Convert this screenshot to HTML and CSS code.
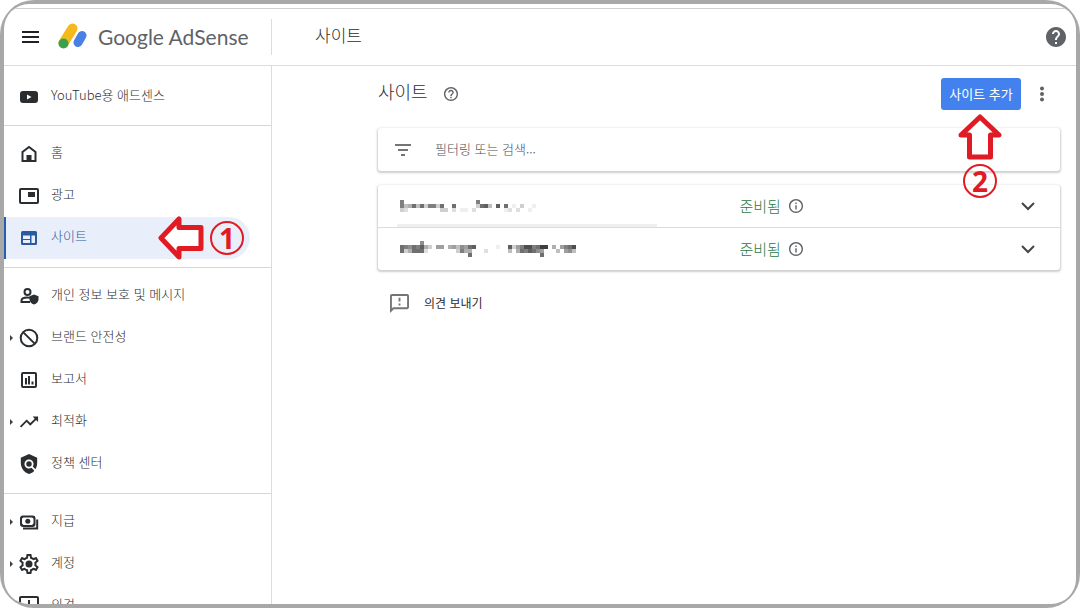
FILE: index.html
```html
<!DOCTYPE html>
<html lang="ko">
  <head>
    <meta charset="UTF-8" />
    <meta name="viewport" content="width=device-width, initial-scale=1.0" />
    <title>Google AdSense - 사이트</title>
    <link rel="stylesheet" href="styles.css">
  </head>
  <body>
    <div class="app">
      <header class="topbar">
        <div class="brand">
          <button class="icon-btn" type="button" aria-label="메뉴">
            <svg class="menu-icon" viewBox="0 0 18 12"><path d="M0 1h17M0 6h17M0 11h17" /></svg>
          </button>
          <a class="logo" href="#">
            <svg class="logo-mark" viewBox="0 0 30 26">
              <path d="M5.500 20L14.500 5.500" stroke="#f4b91c" stroke-width="10" />
              <path d="M20 19.500L24 12.500" stroke="#4a80e4" stroke-width="9" />
              <circle cx="5.500" cy="20.500" r="5" fill="#3c9f4c" />
            </svg>
            <span>Google AdSense</span>
          </a>
        </div>
        <h1>사이트</h1>
        <button class="icon-btn help" type="button" aria-label="도움말">
          <svg class="icon" viewBox="2 2 20 20"><path d="M12 2C6.480 2 2 6.480 2 12s4.480 10 10 10 10-4.480 10-10S17.520 2 12 2zm1 17h-2v-2h2v2zm2.070-7.750l-.9.920C13.450 12.900 13 13.500 13 15h-2v-.5c0-1.100.45-2.100 1.170-2.830l1.240-1.260c.37-.36.59-.86.59-1.410 0-1.100-.9-2-2-2s-2 .9-2 2H8c0-2.210 1.790-4 4-4s4 1.790 4 4c0 .88-.36 1.680-.93 2.250z" /></svg>
        </button>
      </header>

      <div class="content">
        <nav class="sidebar">
          <ul class="first">
            <li>
              <a href="#"><span class="caret"></span>
                <svg class="icon" viewBox="0 0 20 20"><path fill-rule="evenodd" d="M4 4h12a3 3 0 0 1 3 3v6a3 3 0 0 1-3 3H4a3 3 0 0 1-3-3V7a3 3 0 0 1 3-3zm4 3.500v5l4.500-2.500z" /></svg>
                <span class="label">YouTube용 애드센스</span></a>
            </li>
          </ul>
          <ul>
            <li>
              <a href="#"><span class="caret"></span>
                <svg class="icon" viewBox="0 0 20 20"><path fill="none" stroke="currentColor" stroke-width="2" d="M3.500 17V8L10 3l6.500 5v9z" /><path d="M7.500 11h5v6h-5z" /></svg>
                <span class="label">홈</span></a>
            </li>
            <li>
              <a href="#"><span class="caret"></span>
                <svg class="icon" viewBox="0 0 20 20"><rect x="1" y="3" width="18" height="14" rx="1" fill="none" stroke="currentColor" stroke-width="2" /><path d="M9 6h7v5H9z" /></svg>
                <span class="label">광고</span></a>
            </li>
            <li>
              <a class="active" href="#"><span class="caret"></span>
                <svg class="icon" viewBox="0 0 20 20"><path fill-rule="evenodd" d="M3.500 3h13A1.500 1.500 0 0 1 18 4.500v11a1.500 1.500 0 0 1-1.500 1.500h-13A1.500 1.500 0 0 1 2 15.500v-11A1.500 1.500 0 0 1 3.500 3zM4 7.500V11h7V7.500zM4 12v3h7v-3zM12.500 7.500V15H16V7.500z" /></svg>
                <span class="label">사이트</span>
                <span class="callout">
                  <svg class="arrow" viewBox="0 0 46 46"><path d="M3 23L21 4V12.500H43V33.500H21V42Z" /></svg>
                  <span class="number">1</span>
                </span></a>
            </li>
          </ul>
          <ul>
            <li>
              <a href="#"><span class="caret"></span>
                <svg class="icon" viewBox="0 0 20 20"><circle cx="8.500" cy="6" r="3" fill="none" stroke="currentColor" stroke-width="2" /><path fill="none" stroke="currentColor" stroke-width="2" d="M11 16H2.500v-1.500c0-2 3-3 6-3 1 0 2 .1 3 .4" /><path d="M15 8.500l4.500 1.800v3.200c0 2.200-1.800 4.300-4.500 5-2.700-.7-4.500-2.800-4.500-5v-3.200z" /></svg>
                <span class="label">개인 정보 보호 및 메시지</span></a>
            </li>
            <li>
              <a href="#"><span class="caret open"></span>
                <svg class="icon" viewBox="0 0 20 20"><path fill="none" stroke="currentColor" stroke-width="2" d="M3.600 3.600l12.800 12.800M18.300 10a8.300 8.300 0 1 1-16.600 0 8.300 8.300 0 0 1 16.600 0z" /></svg>
                <span class="label">브랜드 안전성</span></a>
            </li>
            <li>
              <a href="#"><span class="caret"></span>
                <svg class="icon" viewBox="0 0 20 20"><rect x="3" y="3" width="14" height="14" rx="1" fill="none" stroke="currentColor" stroke-width="2" /><path d="M6 8h2v6.500H6zM9 6h2v8.500H9zM12.500 11.500h2v3h-2z" /></svg>
                <span class="label">보고서</span></a>
            </li>
            <li>
              <a href="#"><span class="caret open"></span>
                <svg class="icon" viewBox="1 1 22 22"><path d="M16 6l2.290 2.290-4.880 4.880-4-4L2 16.590 3.410 18l6-6 4 4 6.300-6.290L22 12V6z" /></svg>
                <span class="label">최적화</span></a>
            </li>
            <li>
              <a href="#"><span class="caret"></span>
                <svg class="icon" viewBox="1 1 22 22"><path d="M21 5l-9-4-9 4v6c0 5.550 3.840 10.740 9 12 2.300-.56 4.330-1.900 5.880-3.710l-3.120-3.120c-1.940 1.290-4.580 1.070-6.290-.64-1.950-1.950-1.950-5.120 0-7.070 1.950-1.950 5.120-1.950 7.070 0 1.710 1.710 1.920 4.350.64 6.290l2.900 2.900C20.290 15.690 21 13.380 21 11V5z" /><circle cx="12" cy="12" r="3" /></svg>
                <span class="label">정책 센터</span></a>
            </li>
          </ul>
          <ul>
            <li>
              <a href="#"><span class="caret open"></span>
                <svg class="icon" viewBox="0 0 20 20"><rect x="2" y="4.500" width="13.500" height="9.500" rx="2" fill="none" stroke="currentColor" stroke-width="2" /><circle cx="8.800" cy="9.200" r="2.500" /><path d="M2 4h3.500L2 7.500zM15.500 4H12l3.500 3.500zM2 14h3.500L2 10.500zM15.500 14H12l3.500-3.500z" /><path fill="none" stroke="currentColor" stroke-width="2" d="M18.200 7.500V16.500H4" /></svg>
                <span class="label">지급</span></a>
            </li>
            <li>
              <a href="#"><span class="caret open"></span>
                <svg class="icon" viewBox="2 2 20 20"><path d="M19.430 12.980c.04-.32.070-.64.070-.98 0-.34-.03-.66-.07-.98l2.110-1.650c.19-.15.24-.42.12-.64l-2-3.460c-.09-.16-.26-.25-.44-.25-.06 0-.12.010-.17.030l-2.490 1c-.52-.4-1.080-.73-1.690-.98l-.38-2.650C14.460 2.180 14.250 2 14 2h-4c-.25 0-.46.18-.49.42l-.38 2.650c-.61.25-1.170.59-1.690.98l-2.490-1c-.06-.02-.12-.03-.18-.03-.17 0-.34.090-.43.250l-2 3.460c-.13.220-.07.490.12.640l2.110 1.650c-.04.320-.07.650-.07.980 0 .33.030.66.070.98l-2.110 1.650c-.19.150-.24.420-.12.640l2 3.460c.09.160.26.250.44.250.06 0 .12-.01.17-.03l2.490-1c.52.4 1.080.73 1.690.98l.38 2.650c.03.240.24.420.49.420h4c.25 0 .46-.18.49-.42l.38-2.650c.61-.25 1.170-.59 1.690-.98l2.490 1c.06.020.12.030.18.030.17 0 .34-.09.43-.25l2-3.460c.12-.22.070-.49-.12-.64l-2.110-1.650zm-1.980-1.710c.04.310.05.520.05.730 0 .21-.02.430-.05.730l-.14 1.130.89.7 1.080.84-.7 1.210-1.270-.51-1.040-.42-.9.680c-.43.320-.84.560-1.250.73l-1.060.43-.16 1.130-.2 1.350h-1.400l-.19-1.350-.16-1.130-1.060-.43c-.43-.18-.83-.41-1.230-.71l-.91-.7-1.060.43-1.270.510-.7-1.210 1.080-.84.890-.7-.14-1.130c-.03-.31-.05-.54-.05-.74s.020-.43.050-.73l.14-1.130-.89-.7-1.080-.84.7-1.210 1.270.51 1.040.42.9-.68c.43-.32.840-.56 1.250-.73l1.060-.43.160-1.130.2-1.350h1.390l.19 1.350.16 1.130 1.060.43c.43.180.83.410 1.230.71l.91.7 1.060-.43 1.270-.51.7 1.210-1.070.85-.89.7.14 1.130z" /><circle cx="12" cy="12" r="3.500" /></svg>
                <span class="label">계정</span></a>
            </li>
            <li>
              <a href="#"><span class="caret"></span>
                <svg class="icon" viewBox="2 2 20 20"><path d="M20 2H4c-1.100 0-2 .9-2 2v18l4-4h14c1.100 0 2-.9 2-2V4c0-1.100-.9-2-2-2zm0 14H5.200L4 17.200V4h16v12zM11 12h2v2h-2zm0-6h2v4h-2z" /></svg>
                <span class="label">의견</span></a>
            </li>
          </ul>
        </nav>

        <main>
          <div class="page-head">
            <h2>사이트</h2>
            <svg class="hint" viewBox="2 2 20 20"><path d="M11 18h2v-2h-2v2zm1-16C6.480 2 2 6.480 2 12s4.480 10 10 10 10-4.480 10-10S17.520 2 12 2zm0 18c-4.410 0-8-3.590-8-8s3.590-8 8-8 8 3.590 8 8-3.590 8-8 8zm0-14c-2.210 0-4 1.790-4 4h2c0-1.100.9-2 2-2s2 .9 2 2c0 2-3 1.750-3 5h2c0-2.250 3-2.500 3-5 0-2.210-1.790-4-4-4z" /></svg>
            <div class="actions">
              <button class="add-btn" type="button">사이트 추가</button>
              <span class="callout below">
                <svg class="arrow" viewBox="0 0 46 46"><path d="M23 3L42 21H33.500V43H12.500V21H4Z" /></svg>
                <span class="number">2</span>
              </span>
            </div>
            <button class="icon-btn more" type="button" aria-label="더보기">
              <svg viewBox="0 0 6 16"><circle cx="3" cy="2.500" r="2" /><circle cx="3" cy="8" r="2" /><circle cx="3" cy="13.500" r="2" /></svg>
            </button>
          </div>

          <div class="card filter">
            <svg class="filter-icon" viewBox="0 0 16 12"><path d="M0 1h16M3 6h10M6 11h4" /></svg>
            <input type="text" aria-label="필터링 또는 검색" placeholder="필터링 또는 검색..." />
          </div>

          <table class="card sites">
            <tbody>
              <tr>
                <td class="site masked"><svg class="mosaic" data-name="first" viewBox="0 0 180 12"></svg></td>
                <td class="status"><span>준비됨</span>
                  <svg viewBox="2 2 20 20"><path d="M11 7h2v2h-2zm0 4h2v6h-2zm1-9C6.480 2 2 6.480 2 12s4.480 10 10 10 10-4.480 10-10S17.520 2 12 2zm0 18c-4.410 0-8-3.590-8-8s3.590-8 8-8 8 3.590 8 8-3.590 8-8 8z" /></svg></td>
                <td class="expand"><button class="icon-btn" type="button" aria-label="펼치기"><svg viewBox="0 0 14 9"><path d="M1 1l6 6 6-6" /></svg></button></td>
              </tr>
              <tr>
                <td class="site"><svg class="mosaic" data-name="second" viewBox="0 0 180 16"></svg></td>
                <td class="status"><span>준비됨</span>
                  <svg viewBox="2 2 20 20"><path d="M11 7h2v2h-2zm0 4h2v6h-2zm1-9C6.480 2 2 6.480 2 12s4.480 10 10 10 10-4.480 10-10S17.520 2 12 2zm0 18c-4.410 0-8-3.590-8-8s3.590-8 8-8 8 3.590 8 8-3.590 8-8 8z" /></svg></td>
                <td class="expand"><button class="icon-btn" type="button" aria-label="펼치기"><svg viewBox="0 0 14 9"><path d="M1 1l6 6 6-6" /></svg></button></td>
              </tr>
            </tbody>
          </table>

          <a class="feedback" href="#">
            <svg viewBox="2 2 20 20"><path d="M20 2H4c-1.100 0-2 .9-2 2v18l4-4h14c1.100 0 2-.9 2-2V4c0-1.100-.9-2-2-2zm0 14H5.200L4 17.200V4h16v12zM11 12h2v2h-2zm0-6h2v4h-2z" /></svg>
            <span>의견 보내기</span>
          </a>
        </main>
      </div>
    </div>
    <script src="script.js"></script>
  </body>
</html>
```
FILE: styles.css
```css
* {
  box-sizing: border-box;
}
/* rounded grey frame around the whole page, thinner at the corners */
body {
  height: 100vh;
  margin: 0;
  padding: 4px;
  border-radius: 34px;
  background-color: #a8a8a8;
  color: #2b2e31;
  font-family: "Noto Sans CJK KR", sans-serif;
  font-size: 13px;
  line-height: 20px;
}
html {
  background-color: #fff;
}
h1,
h2,
ul {
  margin: 0;
  padding: 0;
  font-weight: 300;
}
ul {
  list-style: none;
}
a {
  color: inherit;
  text-decoration: none;
}
svg {
  display: block;
  flex: none;
  fill: currentColor;
}
.icon {
  width: 20px;
  height: 20px;
}
.icon-btn {
  display: flex;
  padding: 0;
  border: none;
  background: none;
  color: #5f6368;
  cursor: pointer;
}

.app {
  display: flex;
  flex-direction: column;
  height: 100%;
  padding-top: 4px;
  border-radius: 25px;
  background-color: #fff;
  overflow: hidden;
}

.topbar {
  display: flex;
  flex: none;
  align-items: center;
  height: 58px;
  padding-right: 10px;
  border-top: 1px solid #d0d0d0;
  border-bottom: 1px solid #dadce0;
}
.brand {
  display: flex;
  align-items: center;
  gap: 18px;
  width: 268px;
  height: 36px;
  padding-left: 18px;
  border-right: 1px solid #dadce0;
}
.menu-icon {
  width: 18px;
  height: 12px;
  stroke: #202124;
  stroke-width: 2;
}
.logo {
  display: flex;
  align-items: center;
  gap: 10px;
  color: #5f6368;
  font-family: Lato, sans-serif;
  font-size: 21px;
}
.logo-mark {
  width: 30px;
  height: 26px;
  margin-bottom: 3px;
  stroke-linecap: round;
}
h1 {
  margin-left: 43px;
  padding-bottom: 4px;
  font-size: 17px;
  line-height: 24px;
}
.help {
  margin-left: auto;
}

.content {
  display: flex;
  flex: 1;
  min-height: 0;
}
.sidebar {
  flex: none;
  width: 268px;
  border-right: 1px solid #dadce0;
  overflow: hidden;
}
.sidebar ul {
  padding: 7px 0 8px;
  border-bottom: 1px solid #d4d6d9;
}
.sidebar .first {
  padding: 10px 0 7px;
}
.sidebar a {
  display: flex;
  align-items: center;
  height: 42px;
  margin-right: 21px;
  border-left: 2px solid transparent;
  border-radius: 0 21px 21px 0;
}
.sidebar .active {
  border-left-color: #2a5db0;
  background-color: #e8eefa;
  color: #2a5a9e;
}
.label {
  margin-left: 12px;
  padding-bottom: 4px;
  font-weight: 300;
}
.caret {
  width: 13px;
}
.caret::before {
  content: "";
  display: block;
  width: 0;
  margin-left: 4px;
}
.caret.open::before {
  border: 3px solid transparent;
  border-left-color: #3c4043;
  border-right: none;
}

/* red step markers */
.callout {
  display: flex;
  align-items: center;
  gap: 6px;
  margin-left: auto;
  padding-right: 6px;
}
.callout.below {
  position: absolute;
  top: 100%;
  left: 50%;
  flex-direction: column;
  gap: 4px;
  padding: 4px 2px 0 0;
  transform: translateX(-50%);
}
.arrow {
  width: 46px;
  height: 46px;
  fill: #fff;
  stroke: #e11b24;
  stroke-width: 5;
  stroke-linejoin: round;
}
.number {
  width: 34px;
  height: 34px;
  border: 2px solid #e11b24;
  border-radius: 50%;
  color: #e11b24;
  font-family: "Noto Sans", sans-serif;
  font-size: 28px;
  font-weight: 700;
  line-height: 30px;
  text-align: center;
}

main {
  flex: 1;
  min-width: 0;
  padding: 12px 16px 0 106px;
}
.page-head {
  display: flex;
  align-items: center;
  height: 32px;
  margin-bottom: 18px;
}
h2 {
  padding-bottom: 6px;
  font-size: 18px;
  line-height: 24px;
}
.hint {
  width: 14px;
  height: 14px;
  margin-left: 16px;
  color: #5f6368;
}
.actions {
  position: relative;
  margin-left: auto;
}
.add-btn {
  width: 80px;
  height: 32px;
  padding: 0;
  border: none;
  border-radius: 3px;
  background-color: #4382ee;
  color: #fff;
  font: inherit;
  cursor: pointer;
}
.more {
  margin: 0 15px 0 18px;
}
.more svg {
  width: 6px;
  height: 16px;
}

.card {
  width: 100%;
  border-radius: 3px;
  background-color: #fff;
  box-shadow: 0 1px 2px 1px rgba(60, 64, 67, 0.25);
}
.filter {
  display: flex;
  align-items: center;
  height: 43px;
  margin-bottom: 14px;
  padding-left: 17px;
}
.filter-icon {
  width: 16px;
  height: 12px;
  stroke: #757575;
  stroke-width: 2;
}
.filter input {
  flex: 1;
  min-width: 0;
  margin-left: 24px;
  padding: 0 0 2px;
  border: none;
  outline: none;
  background: none;
  font: inherit;
  font-weight: 300;
}
.filter input::placeholder {
  color: #4c4f53;
  opacity: 1;
}

.sites {
  border-spacing: 0;
  table-layout: fixed;
}
.sites td {
  height: 42px;
  padding: 0;
}
.sites tr + tr td {
  height: 43px;
  border-top: 1px solid #dadce0;
}
.site {
  width: 53%;
}
.sites .site {
  padding-left: 22px;
}
.masked {
  position: relative;
}
.masked::after {
  content: "";
  position: absolute;
  bottom: 0;
  left: 19px;
  width: 260px;
  height: 3px;
  background-color: #efefef;
}
.mosaic {
  width: 180px;
  shape-rendering: crispEdges;
}
.sites .status {
  padding-bottom: 2px;
}
.status span,
.status svg {
  display: inline-block;
  vertical-align: middle;
}
.status span {
  color: #2a7a42;
  font-size: 15px;
  font-weight: 300;
}
.status svg {
  width: 14px;
  height: 14px;
  margin-left: 4px;
  color: #5f6368;
}
.expand .icon-btn {
  margin: 0 25px 0 auto;
}
.expand svg {
  width: 14px;
  height: 9px;
  fill: none;
  stroke: #444;
  stroke-width: 2;
}

.feedback {
  display: inline-flex;
  align-items: center;
  gap: 15px;
  margin: 23px 0 0 12px;
  font-size: 12px;
}
.feedback svg {
  width: 19px;
  height: 19px;
  color: #757575;
}
```
FILE: script.js
```js
// Masked site names, one digit per 4px block (0 is blank, f is black)
const masks = {
  first: [
    "800000000000000000080000000000000000000000000",
    "845949388390090000039a40a09010300100000000000",
    "320000000033020110200000001202001000000000000",
  ],
  second: [
    "000007000000000000000000000000000000000000000",
    "98798a530660564769a00000100a368bb89cc050689b0",
    "93599920000000385500020000040598a976000406740",
    "000000000000000009000000000000000009000000000",
  ],
};

document.querySelectorAll(".mosaic").forEach((svg) => {
  masks[svg.dataset.name].forEach((row, y) => {
    [...row].forEach((digit, x) => {
      if (digit === "0") return;
      const shade = 255 - parseInt(digit, 16) * 16;
      const block = document.createElementNS("http://www.w3.org/2000/svg", "rect");
      block.setAttribute("x", x * 4);
      block.setAttribute("y", y * 4);
      block.setAttribute("width", 4);
      block.setAttribute("height", 4);
      block.setAttribute("fill", `rgb(${shade}, ${shade}, ${shade})`);
      svg.appendChild(block);
    });
  });
});
```
